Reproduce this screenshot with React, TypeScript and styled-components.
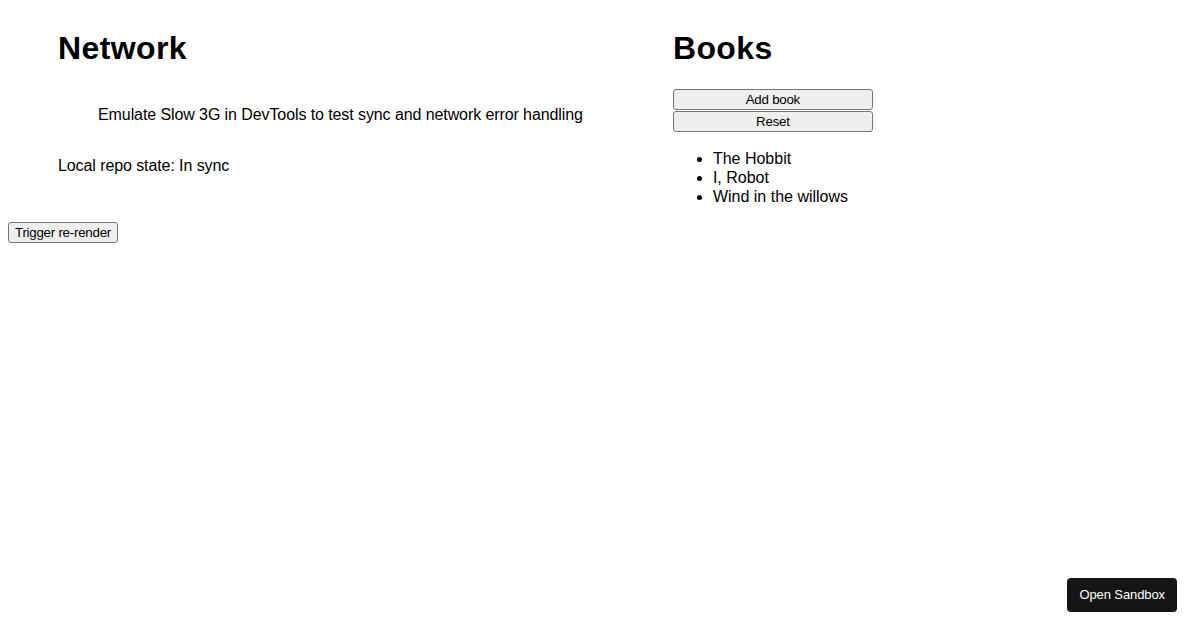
import React, { useState } from "react";
import styled, { createGlobalStyle } from "styled-components";

const GlobalStyle = createGlobalStyle`
  body {
    margin: 8px;
    font-family: "Liberation Sans", Arial, sans-serif;
    font-size: 16px;
    color: #000;
    background: #fff;
  }
`;

const Columns = styled.div`
  display: flex;
  gap: 50px;
  padding: 1px 0 0 50px;
`;

const Column = styled.div`
  display: flow-root;
`;

const Heading = styled.h1`
  font-size: 32px;
  font-weight: bold;
  letter-spacing: 0.4px;
  margin: 21.44px 0;
`;

const Hint = styled.blockquote`
  margin: 16px 40px;
  padding: 1px 0;
`;

const Para = styled.p`
  margin: 16px 0;
  line-height: 18.4px;
  letter-spacing: -0.09px;
`;

const NativeButton = styled.button<{ $wide?: boolean }>`
  display: ${(p) => (p.$wide ? "block" : "inline-block")};
  width: ${(p) => (p.$wide ? "200px" : "auto")};
  height: 21px;
  padding: 1px 6px;
  font-family: "Liberation Sans", Arial, sans-serif;
  font-size: 13.333px;
  letter-spacing: -0.25px;
  color: #000;
  background: #efefef;
  border: 1px solid #767676;
  border-radius: 3px;
  box-sizing: border-box;
  cursor: pointer;
`;

const ButtonStack = styled.div`
  display: flex;
  flex-direction: column;
  gap: 1px;
`;

const BookList = styled.ul`
  margin: 17px 0 16px;
  padding-left: 40px;
  line-height: 19px;
`;

const SandboxLink = styled.a`
  position: fixed;
  right: 23px;
  bottom: 18px;
  display: flex;
  align-items: center;
  height: 34px;
  padding: 0 12px 1px;
  box-sizing: border-box;
  background: #151515;
  color: #fff;
  border-radius: 4px;
  font-family: "Liberation Sans", Arial, sans-serif;
  font-size: 13px;
  letter-spacing: -0.1px;
  text-decoration: none;
`;

const initialBooks = ["The Hobbit", "I, Robot", "Wind in the willows"];

const App: React.FC = () => {
  const [books, setBooks] = useState<string[]>(initialBooks);
  const [, setTick] = useState(0);

  return (
    <>
      <GlobalStyle />
      <Columns>
        <Column>
          <Heading>Network</Heading>
          <Hint>
            <Para>
              Emulate Slow 3G in DevTools to test sync and network error handling
            </Para>
          </Hint>
          <Para>Local repo state: In sync</Para>
        </Column>
        <Column>
          <Heading>Books</Heading>
          <ButtonStack>
            <NativeButton
              $wide
              onClick={() => setBooks([...books, "New book " + books.length])}
            >
              Add book
            </NativeButton>
            <NativeButton $wide onClick={() => setBooks(initialBooks)}>
              Reset
            </NativeButton>
          </ButtonStack>
          <BookList>
            {books.map((b) => (
              <li key={b}>{b}</li>
            ))}
          </BookList>
        </Column>
      </Columns>
      <NativeButton onClick={() => setTick((t) => t + 1)}>
        Trigger re-render
      </NativeButton>
      <SandboxLink href="#">Open Sandbox</SandboxLink>
    </>
  );
};

export default App;
